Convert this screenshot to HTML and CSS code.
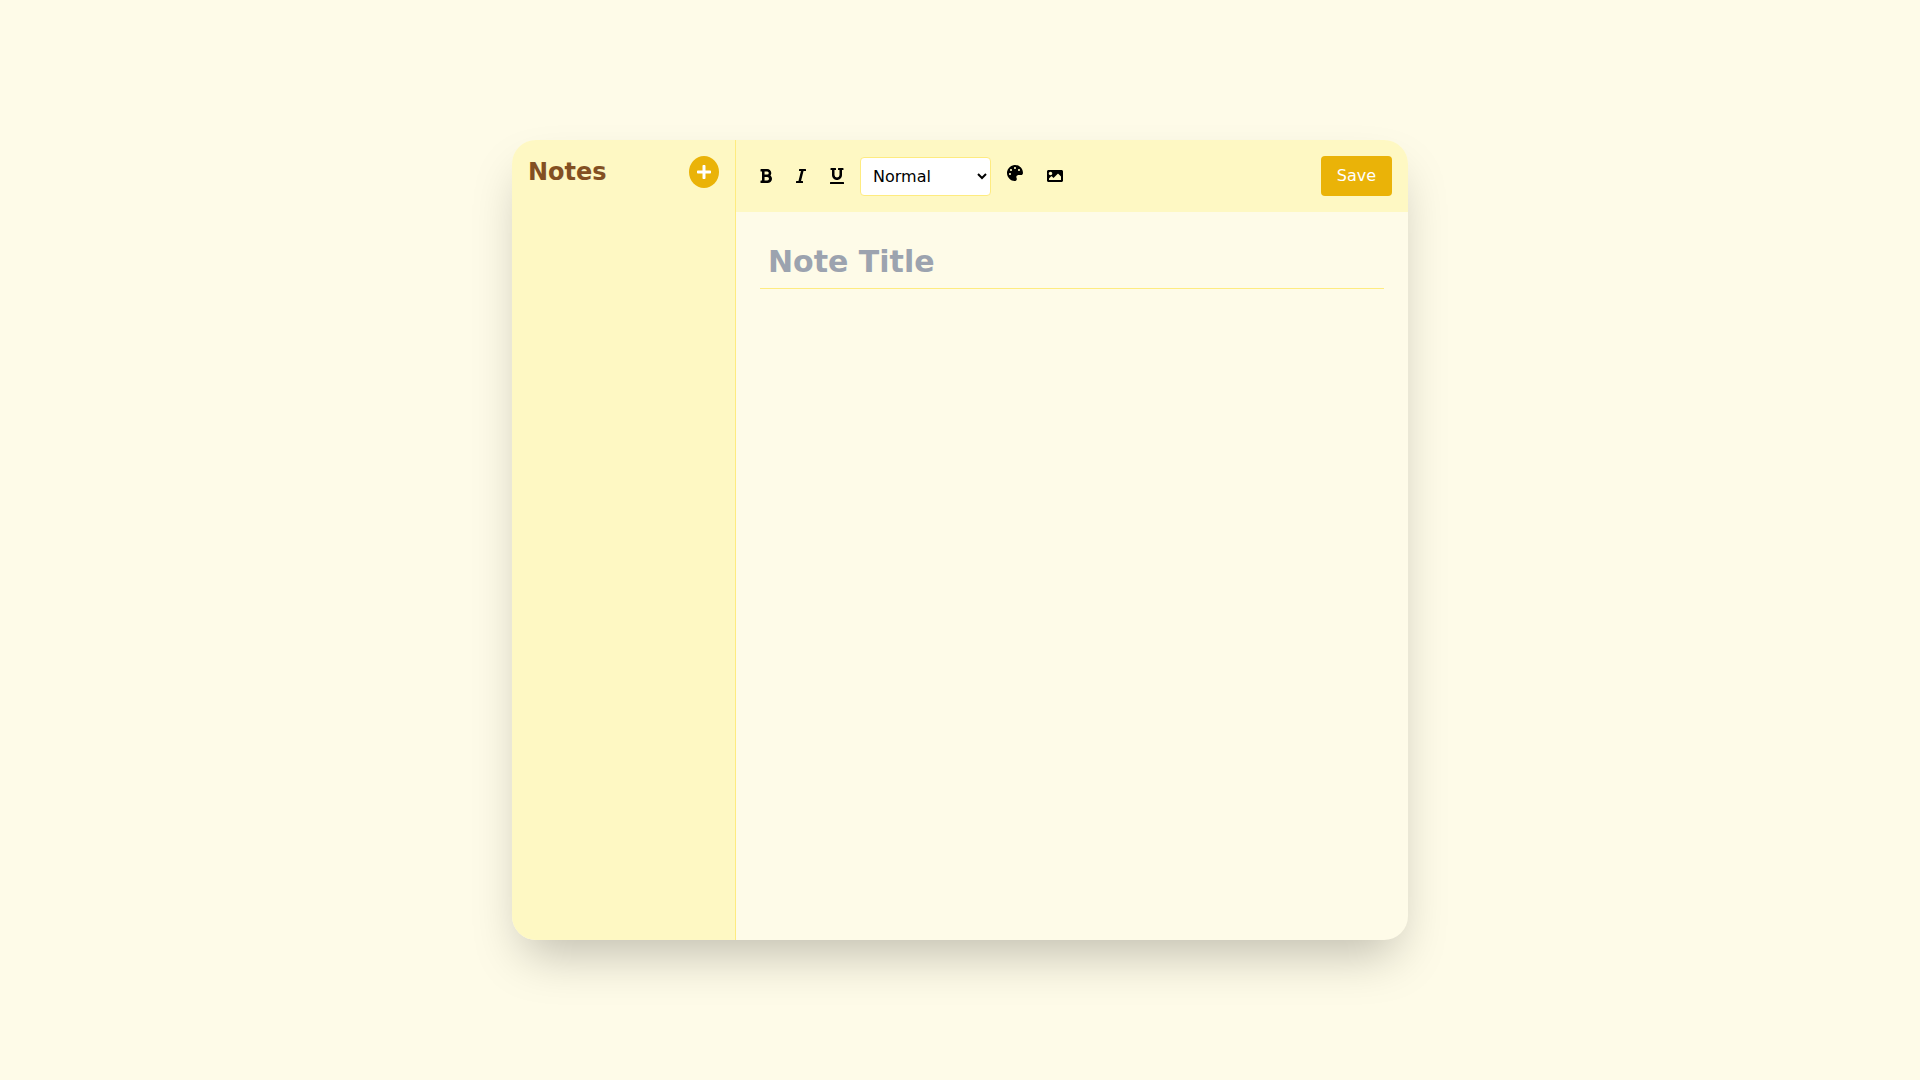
FILE: index.html
```html
<!DOCTYPE html>
<html lang="en">
<head>
<meta charset="utf-8">
<title>Notes</title>
<link rel="stylesheet" href="styles.css">
</head>
<body>
<main class="app">
  <aside class="sidebar">
    <header class="sidebar-head">
      <h1 class="brand">Notes</h1>
      <button class="add" type="button" aria-label="New note">
        <svg class="ico w14" viewBox="0 0 448 512"><path d="M416 208H272V64c0-17.670-14.330-32-32-32h-32c-17.670 0-32 14.330-32 32v144H32c-17.670 0-32 14.330-32 32v32c0 17.670 14.330 32 32 32h144v144c0 17.670 14.330 32 32 32h32c17.670 0 32-14.330 32-32V304h144c17.670 0 32-14.330 32-32v-32c0-17.670-14.330-32-32-32z"/></svg>
      </button>
    </header>
  </aside>
  <section class="editor">
    <div class="toolbar">
      <button class="tool" type="button" aria-label="Bold">
        <svg class="ico w12" viewBox="0 0 384 512"><path d="M333.490 238a122 122 0 0 0 27-65.210C367.870 96.490 306.910 32 231.880 32H32a16 16 0 0 0-16 16v48a16 16 0 0 0 16 16h31.870v288H32a16 16 0 0 0-16 16v48a16 16 0 0 0 16 16h209.320c70.800 0 134.140-51.750 141-122.400 4.740-48.450-16.390-92.060-48.830-119.600zM145.660 112h86.220a48 48 0 0 1 0 96h-86.220zm86.220 288h-86.220V288h86.220a56 56 0 0 1 0 112z"/></svg>
      </button>
      <button class="tool" type="button" aria-label="Italic">
        <svg class="ico w10" viewBox="0 0 320 512"><path d="M320 48v32a16 16 0 0 1-16 16h-62.760l-80 320H208a16 16 0 0 1 16 16v32a16 16 0 0 1-16 16H16a16 16 0 0 1-16-16v-32a16 16 0 0 1 16-16h62.760l80-320H112a16 16 0 0 1-16-16V48a16 16 0 0 1 16-16h192a16 16 0 0 1 16 16z"/></svg>
      </button>
      <button class="tool" type="button" aria-label="Underline">
        <svg class="ico w14" viewBox="0 0 448 512"><path d="M32 64h32v160c0 88.220 71.780 160 160 160s160-71.780 160-160V64h32a16 16 0 0 0 16-16V16a16 16 0 0 0-16-16H272a16 16 0 0 0-16 16v32a16 16 0 0 0 16 16h32v160a80 80 0 0 1-160 0V64h32a16 16 0 0 0 16-16V16a16 16 0 0 0-16-16H32a16 16 0 0 0-16 16v32a16 16 0 0 0 16 16zm400 384H16a16 16 0 0 0-16 16v32a16 16 0 0 0 16 16h416a16 16 0 0 0 16-16v-32a16 16 0 0 0-16-16z"/></svg>
      </button>
      <select class="format" aria-label="Format">
        <option>Normal</option>
        <option>Heading 1</option>
        <option>Heading 2</option>
      </select>
      <button class="tool tool-raised" type="button" aria-label="Colour">
        <svg class="ico w16" viewBox="0 0 512 512"><path d="M204.300 5C104.900 24.400 24.800 104.300 5.200 203.400c-37 187 131.700 326.400 258.800 306.700 41.200-6.400 61.400-54.600 42.500-91.700-23.100-45.400 9.900-98.400 60.900-98.400h79.700c35.800 0 64.800-29.600 64.900-65.300C511.500 97.100 368.100-26.900 204.300 5zM96 320c-17.700 0-32-14.300-32-32s14.300-32 32-32 32 14.300 32 32-14.300 32-32 32zm32-128c-17.700 0-32-14.300-32-32s14.300-32 32-32 32 14.300 32 32-14.300 32-32 32zm128-64c-17.700 0-32-14.300-32-32s14.300-32 32-32 32 14.300 32 32-14.300 32-32 32zm128 64c-17.700 0-32-14.300-32-32s14.300-32 32-32 32 14.300 32 32-14.300 32-32 32z"/></svg>
      </button>
      <button class="tool" type="button" aria-label="Image">
        <svg class="ico w16" viewBox="0 0 512 512"><path d="M464 448H48c-26.510 0-48-21.490-48-48V112c0-26.510 21.490-48 48-48h416c26.510 0 48 21.490 48 48v288c0 26.510-21.490 48-48 48zM112 120c-30.928 0-56 25.072-56 56s25.072 56 56 56 56-25.072 56-56-25.072-56-56-56zM64 384h384V272l-87.515-87.515c-4.686-4.686-12.284-4.686-16.971 0L208 320l-55.515-55.515c-4.686-4.686-12.284-4.686-16.971 0L64 336v48z"/></svg>
      </button>
      <button class="save" type="button">Save</button>
    </div>
    <div class="sheet">
      <input class="title" type="text" placeholder="Note Title" aria-label="Note title">
    </div>
  </section>
</main>
</body>
</html>
```

FILE: styles.css
```css
* {
  box-sizing: border-box;
}

html,
body {
  height: 100%;
}

body {
  margin: 0;
  display: flex;
  align-items: center;
  justify-content: center;
  background: #fefbe8;
  font-family: "DejaVu Sans", sans-serif;
}

button,
select,
input {
  font-family: inherit;
}

.app {
  display: flex;
  width: 896px;
  height: 800px;
  border-radius: 24px;
  overflow: hidden;
  background: #fefbe8;
  box-shadow: 0 25px 50px -12px rgba(0, 0, 0, 0.25);
}

.sidebar {
  width: 224px;
  flex: none;
  padding: 16px;
  background: #fef8c3;
  border-right: 1px solid #feeb80;
}

.sidebar-head {
  display: flex;
  align-items: center;
  justify-content: space-between;
}

.brand {
  margin: 0;
  font-size: 24px;
  line-height: 32px;
  font-weight: 700;
  color: #835022;
}

.add {
  display: flex;
  align-items: center;
  padding: 8px;
  border: 0;
  border-radius: 50%;
  background: #eab308;
  color: #fff;
}

.ico {
  display: block;
  height: 16px;
  fill: currentColor;
}

.w10 { width: 10px; }
.w12 { width: 12px; }
.w14 { width: 14px; }
.w16 { width: 16px; }

.editor {
  flex: 1;
  display: flex;
  flex-direction: column;
  min-width: 0;
}

.toolbar {
  display: flex;
  align-items: center;
  gap: 8px;
  height: 72px;
  padding: 16px;
  background: #fef8c3;
}

.tool {
  display: flex;
  padding: 8px;
  border: 0;
  border-radius: 4px;
  background: transparent;
  color: #000;
}

.tool-raised {
  margin-bottom: 6px;
}

.format {
  width: 131px;
  height: 39px;
  padding: 0 8px;
  border: 1px solid #feeb80;
  border-radius: 4px;
  background: #fff;
  color: #000;
  font-size: 16px;
}

.save {
  margin-left: auto;
  padding: 8px 16px;
  border: 0;
  border-radius: 4px;
  background: #eab308;
  color: #fff;
  font-size: 16px;
  line-height: 24px;
}

.sheet {
  flex: 1;
  padding: 24px;
}

.title {
  display: block;
  width: 100%;
  padding: 8px 8px 9px;
  border: 0;
  border-bottom: 1px solid #feeb80;
  background: transparent;
  font-size: 30px;
  line-height: 35px;
  font-weight: 700;
  color: #835022;
  outline: none;
}

.title::placeholder {
  color: #9ca3af;
  opacity: 1;
}
```
